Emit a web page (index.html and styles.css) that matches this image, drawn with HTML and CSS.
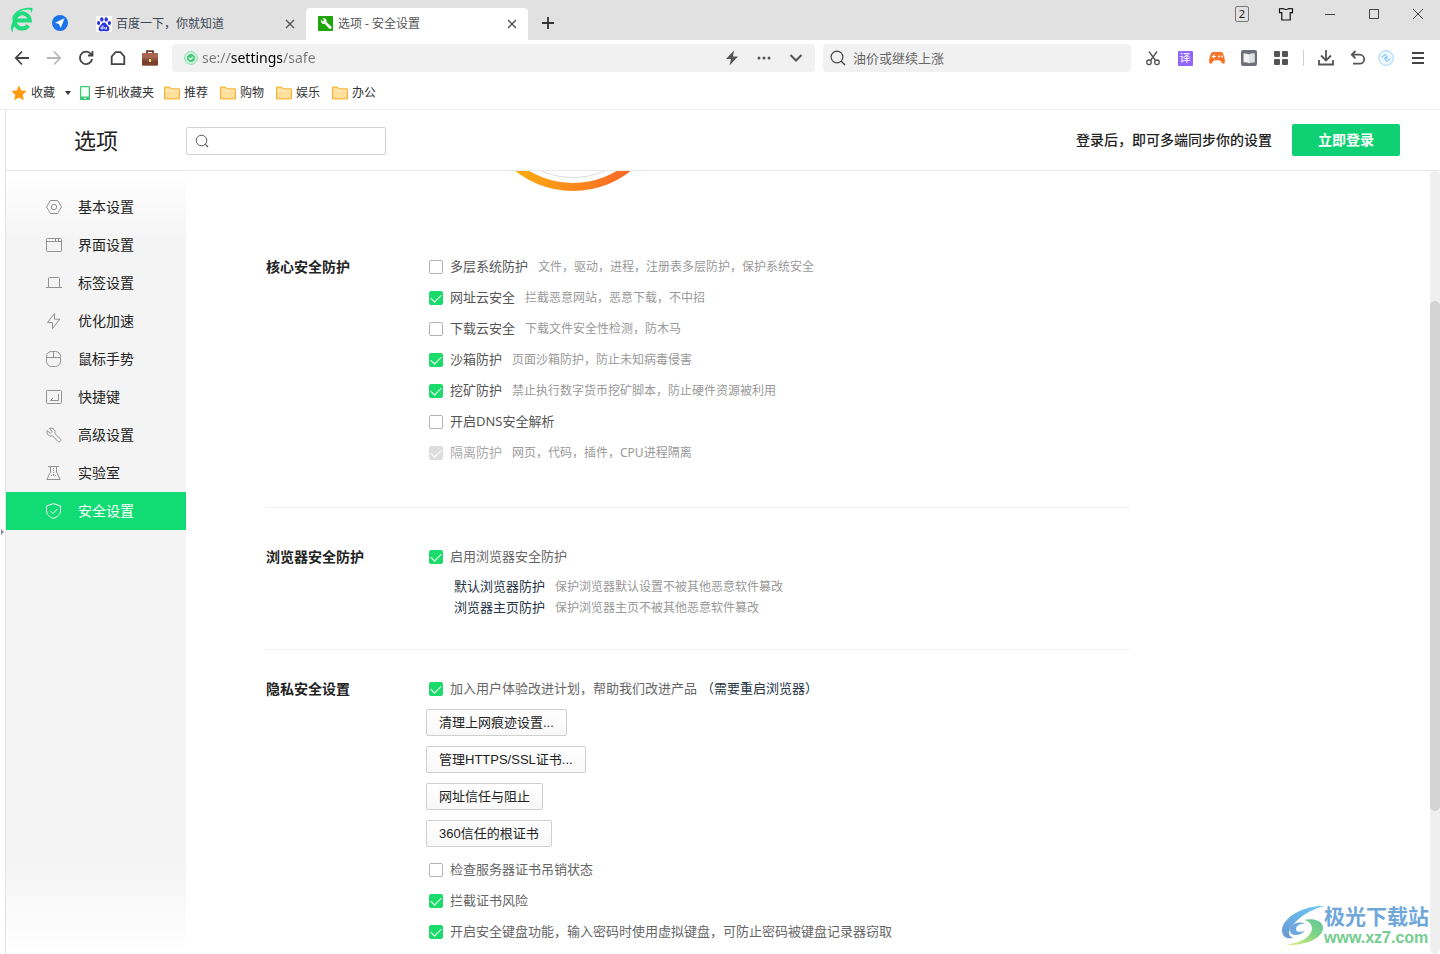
FILE: index.html
```html
<!DOCTYPE html>
<html lang="zh-CN">
<head>
<meta charset="utf-8">
<meta name="viewport" content="width=device-width, initial-scale=1">
<title>选项 - 安全设置</title>
<link rel="stylesheet" href="styles.css">
</head>
<body>
<div class="browser">
  <header class="titlebar">
    <svg class="logo" viewBox="0 0 24 28" aria-hidden="true"><path d="M5 14.500H20.300A7.600 7.600 0 1 0 18.800 19.500" fill="none" stroke="#1fdc7e" stroke-width="4"/><path d="M2 14.500C3 6 12 .5 22.800 2c.5 1.500 0 3.500-1 5 0-2.500-1-3.500-3-3.500C11 3.500 5 8 2 14.500z" fill="#1fdc7e"/><path d="M3.500 16C1 19.500.5 23.500 3.500 26.500 3 23 4 20 6.500 18z" fill="#1fdc7e"/></svg>
    <button class="pin" aria-label="导航"><svg width="16" height="16" viewBox="0 0 16 16"><circle cx="8" cy="8" r="8" fill="#1a73e8"/><path d="M12.600 3.300 3 7.700l4 1.300 1.600 4z" fill="#fff"/></svg></button>
    <nav class="tabs">
      <div class="tab">
        <svg width="16" height="16" viewBox="0 0 16 16" aria-hidden="true"><rect width="16" height="16" rx="1" fill="#fff"/><g fill="#2932e1"><ellipse cx="5.800" cy="3.400" rx="1.700" ry="2.200"/><ellipse cx="10.200" cy="3.400" rx="1.700" ry="2.200"/><ellipse cx="2.600" cy="7" rx="1.600" ry="2"/><ellipse cx="13.400" cy="7" rx="1.600" ry="2"/><path d="M8 6.500c-2 0-2.300 2-4 3.400-2.300 2-1.600 5.400 1 5.400 1.200 0 2-.4 3-.4s1.800.4 3 .4c2.600 0 3.300-3.400 1-5.400C10.300 8.500 10 6.500 8 6.500z"/></g><path d="M7 9.500V13H5.800a1 1 0 0 1 0-2H7M8.700 11v1.500q0 .5.500.5h1.300v-2" fill="none" stroke="#fff" stroke-width=".9"/></svg>
        <span class="tab-title">百度一下，你就知道</span>
        <button class="tab-close" aria-label="关闭标签"><svg width="12" height="12" viewBox="0 0 12 12"><path d="m2 2 8 8M10 2l-8 8"/></svg></button>
      </div>
      <div class="tab tab-active">
        <svg width="16" height="16" viewBox="0 0 16 16" aria-hidden="true"><rect width="15" height="15" rx="1" fill="#1da50b"/><path d="M3 3.600 5 5.500l1.200-1-1.700-2C7 1.700 9 3.400 8.500 6l4.700 4.500c1.300 1.400-.7 3.500-2.100 2.100L6.800 8C4.500 8.600 2.300 6.300 3 3.600z" fill="#fff"/></svg>
        <span class="tab-title">选项 - 安全设置</span>
        <button class="tab-close" aria-label="关闭标签"><svg width="12" height="12" viewBox="0 0 12 12"><path d="m2 2 8 8M10 2l-8 8"/></svg></button>
      </div>
    </nav>
    <button class="new-tab" aria-label="新标签页"><svg width="14" height="14" viewBox="0 0 14 14"><path d="M7 1v12M1 7h12" stroke="#333" stroke-width="1.800"/></svg></button>
    <div class="window-controls">
      <button aria-label="窗口数量"><span class="count">2</span></button>
      <button aria-label="皮肤"><svg width="16" height="16" viewBox="0 0 16 16"><path d="M5 2.500q3 2 6 0l3.500.2v4h-2.300V14H3.800V6.700H1.500v-4z" fill="none" stroke="#111" stroke-width="1.200"/></svg></button>
      <button aria-label="最小化"><svg width="12" height="12" viewBox="0 0 12 12"><path d="M1 6.500h10"/></svg></button>
      <button aria-label="最大化"><svg width="12" height="12" viewBox="0 0 12 12"><path d="M1.500 1.500h9v9h-9z"/></svg></button>
      <button aria-label="关闭"><svg width="12" height="12" viewBox="0 0 12 12"><path d="m1 1 10 10M11 1 1 11"/></svg></button>
    </div>
  </header>

  <div class="toolbar">
    <div class="nav-buttons">
      <button aria-label="后退"><svg width="16" height="16" viewBox="0 0 16 16"><path d="M15 8H2M8 1.500 1.800 8 8 14.500"/></svg></button>
      <button class="dim" aria-label="前进"><svg width="16" height="16" viewBox="0 0 16 16"><path d="M1 8h13M8 1.500 14.200 8 8 14.500"/></svg></button>
      <button aria-label="刷新"><svg width="16" height="16" viewBox="0 0 16 16"><path d="M13.300 4.500A6.200 6.200 0 1 0 14.200 9M14.500 1v4.500H10"/></svg></button>
      <button aria-label="主页"><svg width="16" height="16" viewBox="0 0 16 16"><path d="M1.700 14.200V6.500L5.500 2.200h5L14.300 6.500v7.700z"/></svg></button>
      <button aria-label="工具箱"><svg width="18" height="18" viewBox="0 0 18 18"><path class="grip" d="M6 4V2.200h6V4"/><rect x="1" y="4" width="16" height="12.500" rx="1" fill="#a8644e"/><path d="M1 9h16v6.500q0 1-1 1H2q-1 0-1-1z" fill="#7a402e"/><path d="M1 9v2l8 1.500 8-1.500V9z" fill="#8f523e"/><rect x="8" y="10" width="2" height="3" fill="#ffe07a"/></svg></button>
    </div>
    <div class="field address">
      <svg width="14" height="14" viewBox="0 0 14 14" aria-hidden="true"><circle cx="7" cy="7" r="6.200" fill="#fff" stroke="#63d991"/><circle cx="7" cy="7" r="4.300" fill="#45cf7b"/><path d="m5 7 1.500 1.500L9.200 6" fill="none" stroke="#fff" stroke-width="1.100"/></svg>
      <input class="url" type="text" value="se://settings/safe" aria-label="地址栏">
      <button aria-label="极速模式"><svg width="14" height="16" viewBox="0 0 14 16"><path d="M9 .5 1 9h5l-1.500 6.500L13 6.500H8z" fill="#555"/></svg></button>
      <button aria-label="更多"><svg width="14" height="4" viewBox="0 0 14 4"><g fill="#555"><circle cx="2" cy="2" r="1.500"/><circle cx="7" cy="2" r="1.500"/><circle cx="12" cy="2" r="1.500"/></g></svg></button>
      <button aria-label="展开"><svg width="14" height="8" viewBox="0 0 14 8"><path d="m1.500 1 5.500 5.500L12.500 1" fill="none" stroke="#555" stroke-width="2"/></svg></button>
    </div>
    <div class="field search">
      <svg width="16" height="16" viewBox="0 0 16 16" aria-hidden="true"><circle cx="7" cy="7" r="5.900" fill="none" stroke="#444" stroke-width="1.200"/><path d="m11.300 11.300 3.700 3.700" stroke="#444" stroke-width="1.400"/></svg>
      <input type="text" value="油价或继续上涨" aria-label="搜索">
    </div>
    <div class="extensions">
      <button aria-label="截图"><svg width="16" height="16" viewBox="0 0 16 16"><g fill="none" stroke="#555" stroke-width="1.300"><path d="m4 1.500 6.500 9M12 1.500l-6.500 9"/><circle cx="4" cy="12.300" r="2.300"/><circle cx="12" cy="12.300" r="2.300"/></g></svg></button>
      <button aria-label="翻译"><span class="translate">译</span></button>
      <button aria-label="游戏"><svg width="18" height="14" viewBox="0 0 18 14"><path d="M4.500 1h9c2 0 3.800 8 3.300 10.500-.5 2-2.500 1.600-3.800-1-.5-1-1-1.300-4-1.300s-3.500.3-4 1.300c-1.300 2.600-3.300 3-3.800 1C.7 9 2.500 1 4.500 1z" fill="#fa7428"/><path d="M5.800 3.500v4M3.800 5.500h4" stroke="#fff" stroke-width="1.200"/><circle cx="11" cy="5.500" r="1" fill="#fff"/><circle cx="14" cy="5.500" r="1" fill="#fff"/></svg></button>
      <button aria-label="阅读"><svg width="16" height="16" viewBox="0 0 16 16"><rect width="16" height="16" rx="2" fill="#6c6f78"/><path d="M2.500 3.500q3-.5 5.500 1 2.500-1.500 5.500-1v9q-3-.5-5.500.8-2.500-1.300-5.500-.8z" fill="#f1f1f1"/><path d="M8 4.500v8.800q2.500-1.300 5.500-.8v-9q-3-.5-5.500 1z" fill="#dfe0e2"/></svg></button>
      <button aria-label="扩展"><svg width="14" height="14" viewBox="0 0 14 14"><g fill="#555"><rect width="6" height="6" rx="1"/><rect x="8" width="6" height="6" rx="1"/><rect y="8" width="6" height="6" rx="1"/><rect x="8" y="8" width="6" height="6" rx="1"/></g></svg></button>
      <span class="divider"></span>
      <button aria-label="下载"><svg width="16" height="16" viewBox="0 0 16 16"><path d="M8 0v10M3 5.500l5 5 5-5M1 10v4.500h14V10" fill="none" stroke="#555" stroke-width="1.800"/></svg></button>
      <button aria-label="恢复"><svg width="16" height="16" viewBox="0 0 16 16"><path d="M2 4.700h7.700a4.400 4.400 0 0 1 0 9H3M5.500 1 1.800 4.700l3.700 3.700" fill="none" stroke="#555" stroke-width="1.800"/></svg></button>
      <button class="avatar" aria-label="账号"><svg width="16" height="16" viewBox="0 0 16 16"><circle cx="8" cy="8" r="7.300" fill="#f0f8ff" stroke="#b4dbf9" stroke-width="1.200"/><path d="M3.500 7.500 7 4.500l2.500 3L7 10M12.500 8.500 9 11.500l-2.500-3L9 6" fill="none" stroke="#93caf5" stroke-width="1.200"/></svg></button>
      <button class="menu" aria-label="菜单"><svg width="12" height="12" viewBox="0 0 12 12"><path d="M0 1h12M0 6h12M0 11h12" stroke="#444" stroke-width="1.800"/></svg></button>
    </div>
  </div>

  <nav class="bookmarks">
    <a href="#"><svg width="16" height="16" viewBox="0 0 16 16"><path d="m8 .5 2.300 5 5.400.6-4 3.700 1.100 5.400L8 12.500l-4.800 2.700 1.100-5.400-4-3.700 5.400-.6z" fill="#ff9a0a"/></svg>收藏</a>
    <button class="drop" aria-label="收藏菜单"><svg width="6" height="4" viewBox="0 0 6 4"><path d="M0 0h6L3 4z" fill="#333"/></svg></button>
    <a class="phone" href="#"><svg width="10" height="14" viewBox="0 0 10 14"><rect x=".6" y=".6" width="8.800" height="12.800" rx=".5" fill="#f4fff8" stroke="#3cc877" stroke-width="1.200"/><path d="M0 10.500h10V14H0z" fill="#3cc877"/><path d="M4 12.300h2" stroke="#fff"/></svg>手机收藏夹</a>
    <a class="folder" href="#"><svg width="16" height="14" viewBox="0 0 16 14"><path d="M.6 12.900V1.100h5l1.500 1.800h8.300v10z" fill="#ffdf9b" stroke="#fba81c"/><path d="M1 4.700h14" stroke="#fff0c8"/></svg>推荐</a>
    <a class="folder" href="#"><svg width="16" height="14" viewBox="0 0 16 14"><path d="M.6 12.900V1.100h5l1.500 1.800h8.300v10z" fill="#ffdf9b" stroke="#fba81c"/><path d="M1 4.700h14" stroke="#fff0c8"/></svg>购物</a>
    <a class="folder" href="#"><svg width="16" height="14" viewBox="0 0 16 14"><path d="M.6 12.900V1.100h5l1.500 1.800h8.300v10z" fill="#ffdf9b" stroke="#fba81c"/><path d="M1 4.700h14" stroke="#fff0c8"/></svg>娱乐</a>
    <a class="folder" href="#"><svg width="16" height="14" viewBox="0 0 16 14"><path d="M.6 12.900V1.100h5l1.500 1.800h8.300v10z" fill="#ffdf9b" stroke="#fba81c"/><path d="M1 4.700h14" stroke="#fff0c8"/></svg>办公</a>
  </nav>

  <div class="viewport">
    <div class="handle"><svg width="4" height="6" viewBox="0 0 4 6" aria-hidden="true"><path d="M1 0l3 3-3 3z" fill="#888"/></svg></div>
    <div class="page">
      <header class="page-header">
        <h1>选项</h1>
        <label class="page-search"><svg width="14" height="14" viewBox="0 0 14 14" aria-hidden="true"><circle cx="6.500" cy="6.500" r="5.300" fill="none" stroke="#555"/><path d="m10.300 10.300 2.700 2.700" stroke="#555" stroke-width="1.200"/></svg><input type="text" aria-label="搜索设置"></label>
        <p class="login-hint">登录后，即可多端同步你的设置</p>
        <button class="login">立即登录</button>
      </header>
      <div class="page-body">
        <nav class="sidebar">
          <a href="#"><svg viewBox="0 0 16 16"><path d="M4.500 1.500h7L15.500 8l-4 6.500h-7L.5 8z"/><circle cx="8" cy="8" r="2.700"/></svg>基本设置</a>
          <a href="#"><svg viewBox="0 0 16 16"><rect x=".5" y="1.500" width="15" height="13" rx="1"/><path d="M.5 4.500h15M9.500 1.500v3M12.500 1.500v3"/></svg>界面设置</a>
          <a href="#"><svg viewBox="0 0 16 16"><path d="M0 12.500h16M2.500 12.500v-9q0-1 1-1h9q1 0 1 1v9"/></svg>标签设置</a>
          <a href="#"><svg viewBox="0 0 16 16"><path d="M8.500.5 1.500 9.500h5v6l7.300-9.300H8.500z"/></svg>优化加速</a>
          <a href="#"><svg viewBox="0 0 16 16"><rect x=".5" y=".5" width="14" height="15" rx="5"/><path d="M.5 6.500h14M7.500.5v6"/></svg>鼠标手势</a>
          <a href="#"><svg viewBox="0 0 16 16"><rect x=".5" y="1.500" width="15" height="13" rx="1"/><path d="M12.500 5v6.500h-8L7 9"/></svg>快捷键</a>
          <a href="#"><svg viewBox="0 0 16 16"><path d="m1 3.500 3.300 2.800L6 4.600 3.500 1.300C7.500.3 10 3.500 8.800 6.500l5.500 5.300c1.500 1.700-.8 4-2.500 2.500L6.500 8.800C3.500 10 .2 7.500 1 3.500z"/></svg>高级设置</a>
          <a href="#"><svg viewBox="0 0 16 16"><path d="M2 1.500h11M4.500 1.500V7L.8 14.500h13.400L10.500 7V1.500"/><path d="M7.500 3v8M5 10.500h5" stroke-dasharray="1 1"/></svg>实验室</a>
          <a class="current" href="#" aria-current="page"><svg viewBox="0 0 16 16"><path d="M7.500.6 14.500 3v5c0 3.500-3 6-7 7.400C3.500 14 .5 11.500.5 8V3zM4.500 8l2.500 2.500 4.300-4.500"/></svg>安全设置</a>
        </nav>
        <main class="content">
          <svg class="gauge" width="186" height="20" viewBox="0 166 186 20" aria-hidden="true"><defs><linearGradient id="arc" x1=".2" x2=".8" y1="0" y2="0"><stop offset="0" stop-color="#fbaa12"/><stop offset="1" stop-color="#fb6a26"/></linearGradient></defs><circle cx="93" cy="93" r="89" fill="none" stroke="url(#arc)" stroke-width="8"/><circle cx="93" cy="93" r="79.500" fill="none" stroke="#ddd"/></svg>

          <section class="group core">
            <h2>核心安全防护</h2>
            <div class="options">
              <div class="row"><label><input type="checkbox">多层系统防护</label><span class="note">文件，驱动，进程，注册表多层防护，保护系统安全</span></div>
              <div class="row"><label><input type="checkbox" checked>网址云安全</label><span class="note">拦截恶意网站，恶意下载，不中招</span></div>
              <div class="row"><label><input type="checkbox">下载云安全</label><span class="note">下载文件安全性检测，防木马</span></div>
              <div class="row"><label><input type="checkbox" checked>沙箱防护</label><span class="note">页面沙箱防护，防止未知病毒侵害</span></div>
              <div class="row"><label><input type="checkbox" checked>挖矿防护</label><span class="note">禁止执行数字货币挖矿脚本，防止硬件资源被利用</span></div>
              <div class="row"><label><input type="checkbox">开启DNS安全解析</label></div>
              <div class="row disabled"><label><input type="checkbox" checked disabled>隔离防护</label><span class="note">网页，代码，插件，CPU进程隔离</span></div>
            </div>
          </section>

          <section class="group shield">
            <h2>浏览器安全防护</h2>
            <div class="options">
              <div class="row soft"><label><input type="checkbox" checked>启用浏览器安全防护</label></div>
              <div class="sub">
                <p>默认浏览器防护<span class="note">保护浏览器默认设置不被其他恶意软件篡改</span></p>
                <p>浏览器主页防护<span class="note">保护浏览器主页不被其他恶意软件篡改</span></p>
              </div>
            </div>
          </section>

          <section class="group privacy">
            <h2>隐私安全设置</h2>
            <div class="options">
              <div class="row soft"><label><input type="checkbox" checked>加入用户体验改进计划，帮助我们改进产品</label><span class="restart">（需要重启浏览器）</span></div>
              <div class="actions">
                <button>清理上网痕迹设置...</button>
                <button>管理HTTPS/SSL证书...</button>
                <button>网址信任与阻止</button>
                <button>360信任的根证书</button>
              </div>
              <div class="row soft"><label><input type="checkbox">检查服务器证书吊销状态</label></div>
              <div class="row soft"><label><input type="checkbox" checked>拦截证书风险</label></div>
              <div class="row soft"><label><input type="checkbox" checked>开启安全键盘功能，输入密码时使用虚拟键盘，可防止密码被键盘记录器窃取</label></div>
            </div>
          </section>
        </main>
        <div class="scrollbar"><div class="thumb"></div></div>
      </div>
    </div>
  </div>

  <div class="watermark">
    <svg width="46" height="42" viewBox="0 0 46 42" aria-hidden="true"><defs><linearGradient id="blue" x1="0" y1="1" x2="1" y2="0"><stop offset="0" stop-color="#6a97d3"/><stop offset="1" stop-color="#6accf5"/></linearGradient><linearGradient id="green" x1="0" y1="1" x2="1" y2="0"><stop offset="0" stop-color="#e6f07c"/><stop offset=".6" stop-color="#7dd487"/><stop offset="1" stop-color="#63c49b"/></linearGradient></defs><path d="M44 1C25 0 2 11 1 25c0 8 6 9 11 8-5-2-5-7-1-12C18 12 30 4 44 1z" fill="url(#blue)"/><path d="M25 19c-7-4-16 0-16 6.500 0 6 10 6 15 0-4 2-9 2-9-1.500 0-3 4-6 10-5z" fill="#6fa8de"/><path d="M23 15c8-2 19 0 19 8 0 9-15 18-38 17 16-2 26-8 27-16 0-5-3-8-8-9z" fill="url(#green)"/></svg>
    <div><strong>极光下载站</strong><span>www.xz7.com</span></div>
  </div>
</div>
</body>
</html>
```
FILE: styles.css
```css
* { box-sizing: border-box; }

body {
  margin: 0;
  color: #222;
  background: #fff;
  font: 13px/20px "Noto Sans", "Noto Sans CJK SC", sans-serif;
}

h1, h2, p { margin: 0; }
a { color: inherit; text-decoration: none; }
svg { display: block; flex: none; }

button {
  padding: 0;
  border: 0;
  background: none;
  color: inherit;
  font: inherit;
}

input {
  min-width: 0;
  margin: 0;
  padding: 0;
  border: 0;
  outline: 0;
  background: none;
  font: inherit;
}

.browser {
  position: relative;
  display: flex;
  flex-direction: column;
  height: 100vh;
  overflow: hidden;
}

/* Tab strip */
.titlebar {
  display: flex;
  flex: none;
  height: 40px;
  padding-left: 9px;
  background: #e1e1e1;
}
.logo { width: 25px; height: 28px; margin-top: 6px; }
.pin { width: 16px; height: 16px; margin: 15px 16px 0 18px; }
.tabs { display: flex; flex: 0 1 444px; padding-top: 8px; }
.tab {
  display: flex;
  flex: 1;
  align-items: center;
  gap: 4px;
  min-width: 0;
  padding: 0 10px 0 12px;
  border-radius: 4px 4px 0 0;
  color: #3c4654;
  font-size: 12px;
}
.tab-active { background: #fff; color: #555; }
.tab-title { flex: 1; overflow: hidden; white-space: nowrap; line-height: 22px; }
.tab-close { width: 12px; height: 12px; }
.tab-close svg { stroke: #555; stroke-width: 1.4; }
.new-tab { width: 40px; height: 32px; margin-top: 7px; display: grid; place-items: center; }
.window-controls { display: flex; height: 28px; margin-left: auto; }
.window-controls button { display: grid; width: 44px; place-items: center; }
.window-controls svg { fill: none; stroke: #444; }
.count {
  width: 14px;
  height: 16px;
  border: 1px solid #777;
  border-radius: 2px;
  font-size: 11px;
  line-height: 14px;
  text-align: center;
}

/* Address row */
.toolbar {
  display: flex;
  flex: none;
  align-items: center;
  height: 36px;
  padding: 0 2px 0 6px;
}
.nav-buttons, .extensions { display: flex; flex: none; align-items: center; }
.nav-buttons { margin-right: 6px; }
.nav-buttons button, .extensions button {
  display: grid;
  place-items: center;
  width: 32px;
  height: 28px;
}
.nav-buttons svg { fill: none; stroke: #444; stroke-width: 1.8; }
.nav-buttons rect, .nav-buttons path[fill] { stroke: none; }
.nav-buttons .grip { stroke: #6b3a28; }
.nav-buttons .dim svg { stroke: #b8b8b8; }
.extensions { margin-left: 6px; }
.extensions .avatar { width: 24px; }
.extensions .menu { width: 40px; }
.divider { width: 1px; height: 16px; margin: 0 6px; background: #d0d0d0; }
.translate {
  width: 15px;
  height: 15px;
  border-radius: 1px;
  background: #9166ff;
  color: #fff;
  font-size: 11px;
  line-height: 14px;
}
.field {
  display: flex;
  align-items: center;
  height: 28px;
  border-radius: 4px;
  background: #f1f1f1;
  color: #666;
}
.address { flex: 628; padding: 0 3px 0 12px; }
.address button { display: grid; place-items: center; width: 32px; height: 28px; }
.url {
  flex: 1;
  margin-left: 4px;
  font-size: 14px;
  color: transparent;
  caret-color: #000;
  background: linear-gradient(90deg, #777 28px, #000 28px 80px, #777 80px) text;
}
.search { flex: 294; margin-left: 8px; padding: 0 7px; }
.search input { flex: 1; margin-left: 7px; color: #666; }

.bookmarks {
  display: flex;
  flex: none;
  align-items: center;
  gap: 10px;
  height: 34px;
  padding-left: 11px;
  border-bottom: 1px solid #ececec;
  color: #333;
  font-size: 12px;
}
.bookmarks a { display: flex; align-items: center; gap: 4px; }
.drop { width: 6px; }
.bookmarks .phone { margin-left: -1px; }
.folder + .folder { margin-left: 2px; }

/* Settings page */
.viewport { display: flex; flex: 1; min-height: 0; }
.handle { display: grid; align-items: center; flex: none; width: 5px; }
.page {
  display: flex;
  flex: 1;
  flex-direction: column;
  min-width: 0;
  border-left: 1px solid #e4e4e4;
}
.page-header {
  display: flex;
  flex: none;
  align-items: center;
  height: 61px;
  padding: 0 40px 0 0;
  border-bottom: 1px solid #e8e8e8;
}
h1 { width: 180px; font-size: 22px; font-weight: 400; line-height: 32px; text-align: center; }
.page-search {
  display: flex;
  align-items: center;
  width: 200px;
  height: 28px;
  margin-top: 2px;
  padding: 0 8px;
  border: 1px solid #d2d2d2;
  border-radius: 2px;
}
.page-search input { flex: 1; margin-left: 8px; }
.login-hint { margin-left: auto; font-size: 14px; font-weight: 500; }
.login {
  width: 108px;
  height: 32px;
  margin-left: 20px;
  border-radius: 2px;
  background: #0fd072;
  color: #fff;
  font-size: 14px;
  font-weight: 700;
}
.page-body { display: flex; flex: 1; min-height: 0; }

.sidebar {
  flex: none;
  width: 180px;
  padding-top: 17px;
  background: linear-gradient(#fff, #f4f4f4 72px calc(100% - 90px), #fff);
}
.sidebar a {
  display: flex;
  align-items: center;
  gap: 16px;
  height: 38px;
  padding-left: 40px;
  font-size: 14px;
}
.sidebar svg { width: 16px; height: 16px; fill: none; stroke: #929292; }
.sidebar .current { background: #11dc74; color: #fff; }
.sidebar .current svg { stroke: #fff; }

.content { flex: 1; min-width: 0; padding: 0 40px 0 80px; overflow: hidden; }
.gauge { margin: 0 0 60px 214px; }
.group {
  display: grid;
  grid-template-columns: 160px 1fr;
  max-width: 864px;
}
.core { padding-bottom: 39px; border-bottom: 1px solid #f0f0f0; }
.shield { padding: 33px 0 31px; border-bottom: 1px solid #f0f0f0; }
.privacy { padding-top: 23px; }
h2 { font-size: 14px; font-weight: 700; line-height: 31px; }
.row {
  display: flex;
  height: 31px;
  padding-left: 3px;
  color: #555;
  line-height: 31px;
  white-space: nowrap;
}
.row label { display: flex; align-items: center; gap: 7px; }
.soft { color: #666; }
.row.disabled { color: #aaa; }
.note { margin-left: 10px; color: #999; font-size: 12px; }
.restart { margin-left: 4px; color: #263445; }

input[type="checkbox"] {
  display: grid;
  justify-content: center;
  flex: none;
  width: 14px;
  height: 14px;
  border: 1px solid #b4b4b4;
  border-radius: 2px;
  background: #fff;
  appearance: none;
}
input[type="checkbox"]:checked { border-color: #1bdb6b; background: #1bdb6b; }
input[type="checkbox"]:checked::before {
  content: "";
  width: 5px;
  height: 9px;
  border: solid #fff;
  border-width: 0 1px 1px 0;
  transform: rotate(45deg);
}
input[type="checkbox"]:disabled { border-color: #ddd; background: #ddd; }

.sub { margin-top: 4px; padding-left: 28px; color: #263445; line-height: 21px; }
.actions {
  display: flex;
  flex-direction: column;
  align-items: flex-start;
  gap: 10px;
  margin: 5px 0 7px;
}
.actions button {
  height: 27px;
  padding: 0 12px;
  border: 1px solid #cfcfcf;
  border-radius: 2px;
  background: linear-gradient(#fff, #f8f8f8);
  color: #222;
  font-family: "Liberation Sans", "Noto Sans CJK SC", sans-serif;
}

.scrollbar { flex: none; width: 10px; padding-top: 130px; border-radius: 5px; background: #efefef; }
.thumb { height: 510px; border-radius: 5px; background: #d4d4d4; }

.watermark {
  position: absolute;
  right: 11px;
  bottom: 7px;
  display: flex;
  align-items: center;
}
.watermark div { display: grid; margin-left: -3px; }
.watermark strong { color: #70a7db; font-size: 21px; line-height: 24px; }
.watermark span { color: #74cd8e; font: 700 16px/19px "Liberation Sans", sans-serif; }
```
